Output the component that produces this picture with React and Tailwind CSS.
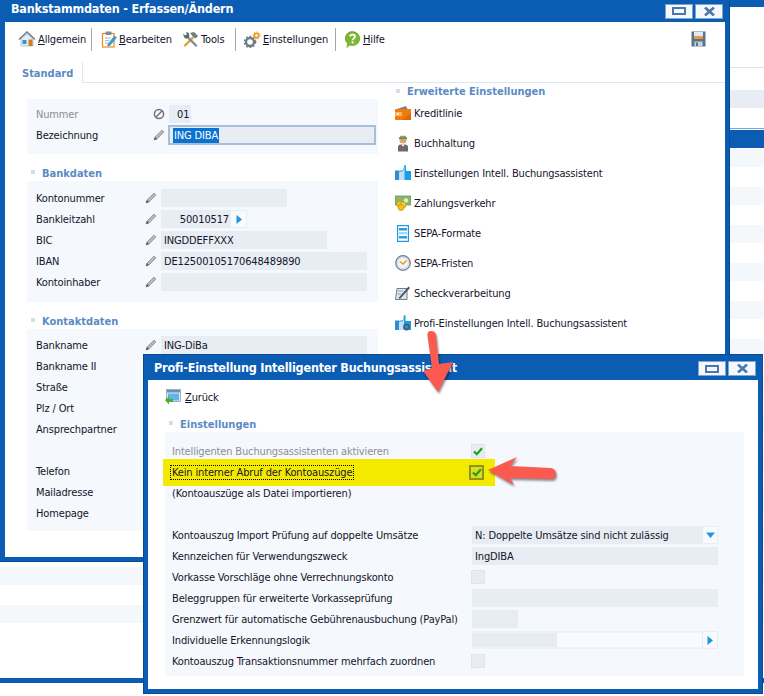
import React from 'react';

const Pencil = () => (
    <svg width="12" height="12" viewBox="0 0 12 12">
        <path d="M1 11 L2 8 L9 1 L11 3 L4 10 Z" fill="#b5b8bc" stroke="#85888c" strokeWidth="0.7" />
        <path d="M1 11 L2 8 L4 10 Z" fill="#555" />
    </svg>
);

const NoEntry = () => (
    <svg width="12" height="12" viewBox="0 0 12 12" fill="none" stroke="#6f747a" strokeWidth="1.5">
        <circle cx="6" cy="6" r="4.6" />
        <path d="M2.8 9.2 L9.2 2.8" />
    </svg>
);

const Home = () => (
    <svg width="18" height="16" viewBox="0 0 18 16">
        <path d="M3 8 V15 H15 V8 L9 3 Z" fill="#e6eef6" stroke="#9aa6b0" strokeWidth="0.6" />
        <path d="M1 8.5 L9 1 L17 8.5" fill="none" stroke="#6f8291" strokeWidth="1.6" />
        <rect x="4.5" y="9" width="4" height="4" fill="#3f8fd8" />
        <rect x="10.5" y="8.5" width="4" height="6.5" fill="#c9801e" />
    </svg>
);

const Clipboard = () => (
    <svg width="16" height="17" viewBox="0 0 16 17">
        <rect x="1.5" y="2.5" width="11.5" height="13.5" fill="#fff" stroke="#ee8a1d" strokeWidth="1.2" />
        <rect x="4.5" y="0.5" width="6" height="3.5" rx="1" fill="#7f8c99" />
        <path d="M4 7 H10 M4 9.5 H8 M4 12 H7" stroke="#9fb7cc" strokeWidth="1" />
        <path d="M7 13 L13.5 5 L15.5 6.6 L9 14.5 L6.8 15 Z" fill="#3aa0e0" stroke="#1c6fae" strokeWidth="0.5" />
    </svg>
);

const Tools = () => (
    <svg width="17" height="16" viewBox="0 0 17 16">
        <path d="M3 14.5 L11 6.5" stroke="#e5a231" strokeWidth="2.4" strokeLinecap="round" />
        <path d="M8 2 L12 1 L16 5 L13.5 7.5 L10 4.5 Z" fill="#6e7c88" />
        <path d="M14 14.5 L6 6.5" stroke="#7f8b96" strokeWidth="2.4" strokeLinecap="round" />
        <path d="M1.5 2.5 L3 4.5 L5 3.5 L4 1.2 C6.5 1 8 3 7 6 L5 7.5 C3 8 1 5.5 1.5 2.5 Z" fill="#59666f" />
    </svg>
);

const Gears = () => (
    <svg width="18" height="17" viewBox="0 0 18 17">
        <circle cx="7" cy="11" r="4" fill="none" stroke="#6f7c88" strokeWidth="2.4" />
        <circle cx="7" cy="11" r="5.6" fill="none" stroke="#6f7c88" strokeWidth="1.4" strokeDasharray="1.8 1.8" />
        <circle cx="13.5" cy="4.5" r="2.2" fill="none" stroke="#ef9a1f" strokeWidth="1.8" />
        <circle cx="13.5" cy="4.5" r="3.6" fill="none" stroke="#ef9a1f" strokeWidth="1" strokeDasharray="1.4 1.4" />
    </svg>
);

const Help = () => (
    <svg width="17" height="17" viewBox="0 0 17 17">
        <path d="M8.5 0.5 A7.5 7 0 1 1 5.5 14 L3 16.5 L3.5 12.5 A7.5 7 0 0 1 8.5 0.5 Z" fill="#7fb72f" stroke="#5f9420" strokeWidth="0.6" />
        <path d="M6 5.5 C6.5 3 11 3 11 5.6 C11 7.4 8.6 7.4 8.6 9.2" fill="none" stroke="#fff" strokeWidth="1.8" />
        <rect x="7.6" y="10.4" width="2" height="2" fill="#fff" />
    </svg>
);

const Save = () => (
    <svg width="15" height="16" viewBox="0 0 15 16">
        <rect x="0.5" y="0.5" width="14" height="15" fill="#5c738f" />
        <rect x="3" y="1" width="9" height="4.5" fill="#dfeaf6" />
        <rect x="3" y="5.5" width="9" height="2.5" fill="#f39a1e" />
        <rect x="3.5" y="10.5" width="8" height="5" fill="#c9d3de" />
        <rect x="5" y="11.5" width="2" height="3.5" fill="#5c738f" />
    </svg>
);

const Wallet = () => (
    <svg width="16" height="16" viewBox="0 0 16 16">
        <path d="M2 4 L11 1 L12.5 4 Z" fill="#7a7f85" />
        <path d="M0 5 Q0 4 1 4 H16 V15 H1 Q0 15 0 14 Z" fill="#f07c0c" />
        <path d="M16 8 L7 15 H16 Z" fill="#d96a05" />
        <rect x="0" y="7" width="7" height="4" fill="#ffb35c" />
        <circle cx="3" cy="9" r="1" fill="#fff" />
    </svg>
);

const Person = () => (
    <svg width="16" height="17" viewBox="0 0 16 17">
        <path d="M3 16.5 V12 Q3 9.5 6 9.5 H10 Q13 9.5 13 12 V16.5 Z" fill="#5e6c7c" />
        <path d="M6.5 9.5 H9.5 L8 12 Z" fill="#fff" />
        <path d="M7.5 11 H8.5 L9 15 L8 16 L7 15 Z" fill="#d8461f" />
        <circle cx="8" cy="5" r="3.6" fill="#e3a06c" />
        <rect x="4" y="2.2" width="8" height="1.8" fill="#3aa247" />
        <rect x="5" y="0.8" width="6" height="1.5" fill="#b88a66" />
    </svg>
);

const Thumb = () => (
    <svg width="16" height="16" viewBox="0 0 16 16">
        <rect x="0" y="5.5" width="4" height="9.5" fill="#2a8fd8" />
        <path d="M4 6 L8 5 L9.5 0 L11 0.5 L11 6 H16 V15 H4 Z" fill="#17a0e8" />
        <path d="M4 7 L8 6 L9.5 1 V15 H4 Z" fill="#c5dff2" />
    </svg>
);

const Money = () => (
    <svg width="16" height="16" viewBox="0 0 16 16">
        <rect x="0" y="1" width="16" height="9" fill="#89b86a" stroke="#5c8f45" strokeWidth="0.7" />
        <circle cx="11" cy="5.5" r="2.2" fill="#dcefc9" />
        <circle cx="4.5" cy="9" r="3" fill="#f3c11f" stroke="#c48e10" strokeWidth="0.7" />
        <circle cx="8" cy="10" r="3" fill="#f7d02f" stroke="#c48e10" strokeWidth="0.7" />
        <circle cx="6" cy="12.5" r="3" fill="#f3c11f" stroke="#c48e10" strokeWidth="0.7" />
    </svg>
);

const Doc = () => (
    <svg width="16" height="17" viewBox="0 0 16 17">
        <rect x="2.6" y="0.6" width="10.8" height="15.8" fill="#fff" stroke="#1a9ae6" strokeWidth="1.2" />
        <rect x="4" y="3" width="8" height="2.5" fill="#2b9ce0" />
        <rect x="4" y="7" width="8" height="2.5" fill="#a9d8f4" />
        <rect x="4" y="11" width="8" height="2.5" fill="#2b9ce0" />
    </svg>
);

const Clock = () => (
    <svg width="16" height="16" viewBox="0 0 16 16">
        <circle cx="8" cy="8" r="7.3" fill="#d8dfe7" stroke="#6f7c88" strokeWidth="1.2" />
        <circle cx="8" cy="8" r="5" fill="#f1f4f8" />
        <path d="M4.8 6.5 L8 9 L11.5 5.5" fill="none" stroke="#f0941e" strokeWidth="1.4" />
    </svg>
);

const Cheque = () => (
    <svg width="16" height="16" viewBox="0 0 16 16">
        <path d="M2 3.5 H12 V14.5 H0.5 Z" fill="#dfe6ee" stroke="#66707b" strokeWidth="0.9" />
        <path d="M3.5 13 L13.5 1.5 L15 3 L5 14 Z" fill="#4a5866" />
        <path d="M3 6 H8 M2.5 9 H6" stroke="#8b98a6" strokeWidth="0.9" />
    </svg>
);

const ThumbGear = () => (
    <svg width="16" height="16" viewBox="0 0 16 16">
        <rect x="0" y="5.5" width="4" height="9.5" fill="#2a8fd8" />
        <path d="M4 6 L8 5 L9 0 L10.5 0.5 L10.5 6 H16 V15 H4 Z" fill="#17a0e8" />
        <path d="M4 7 L8 6 L9 1 V15 H4 Z" fill="#c5dff2" />
        <circle cx="11.5" cy="12" r="2.4" fill="none" stroke="#48617a" strokeWidth="2" />
    </svg>
);

const Back = () => (
    <svg width="16" height="16" viewBox="0 0 16 16">
        <rect x="1.5" y="0.5" width="14" height="12" fill="#dcecf8" stroke="#8aa0b2" strokeWidth="0.8" />
        <rect x="2" y="1" width="13" height="2.5" fill="#6b8fae" />
        <rect x="3" y="4.5" width="11" height="7" fill="#5fb5e8" />
        <path d="M0 11 L4 7.5 V10 H8 V13 H4 V15.5 Z" fill="#59a92c" />
    </svg>
);

const ArrowRight = () => (
    <svg width="6" height="9" viewBox="0 0 6 9"><path d="M0.5 0 L6 4.5 L0.5 9 Z" fill="#1f97e0" /></svg>
);

const ArrowDown = () => (
    <svg width="9" height="6" viewBox="0 0 9 6"><path d="M0 0.5 H9 L4.5 6 Z" fill="#1f97e0" /></svg>
);

const Check = () => (
    <svg width="10" height="9" viewBox="0 0 10 9" fill="none" stroke="#1ea01e" strokeWidth="2.2">
        <path d="M1 4.5 L3.8 7.2 L9 1.2" />
    </svg>
);

const TitleButtons = ({ className = '' }) => (
    <div className={`flex gap-[2px] ${className}`}>
        <div className="w-[28px] h-[15px] bg-[#f4f7fb] border border-[#7fa4d0] flex items-center justify-center">
            <div className="w-[14px] h-[8px] border-2 border-[#4a78ad]" />
        </div>
        <div className="w-[28px] h-[15px] bg-[#f4f7fb] border border-[#7fa4d0] flex items-center justify-center">
            <svg width="11" height="9" viewBox="0 0 11 9" fill="none" stroke="#4a78ad" strokeWidth="2.6">
                <path d="M1 0.5 L10 8.5 M10 0.5 L1 8.5" />
            </svg>
        </div>
    </div>
);

const SectionTitle = ({ children, className = '' }) => (
    <div className={`flex items-center h-[18px] ${className}`}>
        <div className="w-[4px] h-[4px] bg-[#d3deeb] ml-[4px] mr-[7px]" />
        <span className="font-bold text-[#5b8bc4] tracking-normal pt-[3px]">{children}</span>
    </div>
);

const Field = ({ label, width = 'w-[206px]', children }) => (
    <div className="flex items-center h-[18px]">
        <span className="w-[109px] ml-[9px] pt-[2px]">{label}</span>
        <span className="w-[16px] flex"><Pencil /></span>
        {width ? <div className={`${width} h-[18px] bg-[#e8ecf3] px-[3px] pt-[2px] flex items-center`}>{children}</div> : null}
    </div>
);

const Sep = () => <div className="w-px h-[23px] bg-[#a6a6a6]" />;

const MainWindow = () => {
    const extras = [
        { name: 'Kreditlinie', icon: Wallet },
        { name: 'Buchhaltung', icon: Person },
        { name: 'Einstellungen Intell. Buchungsassistent', icon: Thumb },
        { name: 'Zahlungsverkehr', icon: Money },
        { name: 'SEPA-Formate', icon: Doc },
        { name: 'SEPA-Fristen', icon: Clock },
        { name: 'Scheckverarbeitung', icon: Cheque },
        { name: 'Profi-Einstellungen Intell. Buchungsassistent', icon: ThumbGear },
    ];

    return (
        <div className="absolute left-0 top-0 w-[730px] h-[562px] flex flex-col bg-[#0b5cb3] border-r border-b border-[#0a4a94] pl-[5px] pr-[4px] pb-[4px]">
            <div className="h-[22px] shrink-0 flex items-center justify-between pl-[6px] pr-[2px]">
                <span className="text-white font-bold text-[12.5px] tracking-[-0.2px] mb-[5px]">Bankstammdaten - Erfassen/Ändern</span>
                <TitleButtons />
            </div>
            <div className="flex-1 bg-white flex flex-col">
                <div className="h-[40px] pb-[6px] flex items-center">
                    <span className="ml-[13px] w-[20px]"><Home /></span>
                    <span className="w-[53px] pt-[2px]"><span className="underline">A</span>llgemein</span>
                    <Sep />
                    <span className="ml-[9px] w-[18px]"><Clipboard /></span>
                    <span className="w-[63px] pt-[2px]"><span className="underline">B</span>earbeiten</span>
                    <span className="w-[19px]"><Tools /></span>
                    <span className="w-[34px] pt-[2px]">Tools</span>
                    <Sep />
                    <span className="ml-[7px] w-[20px]"><Gears /></span>
                    <span className="w-[72px] pt-[2px]"><span className="underline">E</span>instellungen</span>
                    <Sep />
                    <span className="ml-[8px] w-[19px]"><Help /></span>
                    <span className="pt-[2px]"><span className="underline">H</span>ilfe</span>
                    <span className="ml-auto mr-[19px]"><Save /></span>
                </div>
                <div className="h-[21px] border-b border-[#dde5f0]">
                    <div className="w-[78px] h-[21px] bg-white border-r border-[#dde5f0] pl-[17px] pt-[2px] flex items-center font-bold tracking-normal text-[#5b8bc4]">
                        Standard
                    </div>
                </div>
                <div className="flex flex-1">
                    <div className="ml-[22px] w-[351px] pt-[16px]">
                        <div className="h-[55px] bg-[#f5f8fc] pt-[6px] flex flex-col gap-[3px]">
                            <div className="flex items-center h-[18px]">
                                <span className="w-[117px] ml-[9px] pt-[2px] text-[#8a8f98]">Nummer</span>
                                <span className="w-[16px] flex"><NoEntry /></span>
                                <div className="w-[22px] h-[18px] bg-[#e8ecf3] pl-[8px] pt-[2px] flex items-center">01</div>
                            </div>
                            <div className="flex items-center h-[18px]">
                                <span className="w-[117px] ml-[9px] pt-[2px]">Bezeichnung</span>
                                <span className="w-[15px] flex"><Pencil /></span>
                                <div className="w-[208px] h-[20px] bg-[#e8ecf3] border-2 border-[#a3bfdc] pl-[3px] flex items-center">
                                    <span className="bg-[#0a72d0] text-white px-[1px] pt-[1px]">ING DIBA</span>
                                </div>
                            </div>
                        </div>
                        <SectionTitle className="mt-[9px]">Bankdaten</SectionTitle>
                        <div className="h-[121px] bg-[#f5f8fc] pt-[8px] flex flex-col gap-[3px]">
                            <Field label="Kontonummer" width="w-[126px]" />
                            <div className="flex items-center h-[18px]">
                                <span className="w-[109px] ml-[9px] pt-[2px]">Bankleitzahl</span>
                                <span className="w-[16px] flex"><Pencil /></span>
                                <div className="w-[69px] h-[18px] bg-[#e8ecf3] pr-[1px] pt-[2px] flex items-center justify-end">50010517</div>
                                <div className="w-[17px] h-[18px] bg-[#f8fafd] border border-[#e8ecf3] flex items-center justify-center"><ArrowRight /></div>
                            </div>
                            <Field label="BIC" width="w-[166px]">INGDDEFFXXX</Field>
                            <Field label="IBAN">DE12500105170648489890</Field>
                            <Field label="Kontoinhaber" />
                        </div>
                        <SectionTitle className="mt-[9px]">Kontaktdaten</SectionTitle>
                        <div className="h-[202px] bg-[#f5f8fc] pt-[7px] flex flex-col gap-[3px]">
                            <Field label="Bankname">ING-DiBa</Field>
                            <Field label="Bankname II" width="" />
                            <Field label="Straße" width="" />
                            <Field label="Plz / Ort" width="" />
                            <Field label="Ansprechpartner" width="" />
                            <div className="h-[18px]" />
                            <Field label="Telefon" width="" />
                            <Field label="Mailadresse" width="" />
                            <Field label="Homepage" width="" />
                        </div>
                    </div>
                    <div className="ml-[17px] flex-1">
                        <div className="h-[15px] flex items-center">
                            <div className="w-[4px] h-[4px] bg-[#d3deeb] ml-[1px] mr-[7px]" />
                            <span className="font-bold tracking-normal text-[#5b8bc4] pt-[2px]">Erweiterte Einstellungen</span>
                        </div>
                        {extras.map((item) => (
                            <div key={item.name} className="h-[30px] flex items-center gap-[3px]">
                                <span className="w-[16px] flex"><item.icon /></span>
                                <span className="pt-[2px]">{item.name}</span>
                            </div>
                        ))}
                    </div>
                </div>
            </div>
        </div>
    );
};

const Row = ({ label, muted, children }) => (
    <div className="relative flex items-center h-[18px]">
        <span className={`w-[300px] ml-[7px] pt-[2px] shrink-0 ${muted ? 'text-[#8a8f98]' : ''}`}>{label}</span>
        {children}
    </div>
);

const Box = ({ checked }) => (
    <div className="-ml-[1px] w-[14px] h-[14px] bg-[#e8ecf3] border border-[#dfe4ee] flex items-center justify-center">
        {checked ? <Check /> : null}
    </div>
);

const Dialog = () => (
    <div className="absolute left-[143px] top-[354px] w-[620px] h-[340px] flex flex-col bg-[#0b5cb3] border border-[#0a4a94] px-[4px] pb-[4px]">
        <div className="h-[25px] shrink-0 flex items-center justify-between pl-[6px] pr-[2px]">
            <span className="text-white font-bold text-[12.5px] tracking-[-0.2px]">Profi-Einstellung Intelligenter Buchungsassistent</span>
            <TitleButtons className="mt-[2px]" />
        </div>
        <div className="flex-1 bg-white pl-[17px]">
            <div className="h-[34px] flex items-center gap-[4px]">
                <Back />
                <span className="pt-[2px]"><span className="underline">Z</span>urück</span>
            </div>
            <SectionTitle>Einstellungen</SectionTitle>
            <div className="w-[579px] h-[244px] bg-[#f5f8fc] pt-[10px] flex flex-col gap-[3px]">
                <Row label="Intelligenten Buchungsassistenten aktivieren" muted>
                    <Box checked />
                </Row>
                <div className="relative h-[18px]">
                    <div className="absolute -left-[2px] -top-[4px] w-[332px] h-[27px] bg-[#f4ea00]" />
                    <div className="relative flex items-center h-[18px]">
                        <span className="w-[300px] ml-[5px] pt-[2px] shrink-0">
                            <span className="border border-dotted border-black px-[1px]">Kein interner Abruf der Kontoauszüge</span>
                        </span>
                        <div className="-ml-[1px] w-[15px] h-[15px] bg-[#dcdc20] border-2 border-[#8f9415] flex items-center justify-center"><Check /></div>
                    </div>
                </div>
                <Row label="(Kontoauszüge als Datei importieren)" />
                <div className="h-[18px]" />
                <Row label="Kontoauszug Import Prüfung auf doppelte Umsätze">
                    <div className="w-[230px] h-[18px] bg-[#e8ecf3] px-[3px] pt-[2px] flex items-center">N: Doppelte Umsätze sind nicht zulässig</div>
                    <div className="w-[16px] h-[18px] bg-[#f8fafd] border border-[#e8ecf3] flex items-center justify-center"><ArrowDown /></div>
                </Row>
                <Row label="Kennzeichen für Verwendungszweck">
                    <div className="w-[246px] h-[18px] bg-[#e8ecf3] px-[3px] pt-[2px] flex items-center">IngDIBA</div>
                </Row>
                <Row label="Vorkasse Vorschläge ohne Verrechnungskonto"><Box /></Row>
                <Row label="Beleggruppen für erweiterte Vorkasseprüfung">
                    <div className="w-[246px] h-[18px] bg-[#e8ecf3]" />
                </Row>
                <Row label="Grenzwert für automatische Gebührenausbuchung (PayPal)">
                    <div className="w-[46px] h-[18px] bg-[#e8ecf3]" />
                </Row>
                <Row label="Individuelle Erkennungslogik">
                    <div className="w-[230px] h-[18px] bg-[#f8fafd] border-y-2 border-[#eef1f7] flex">
                        <div className="w-[85px] bg-[#e8ecf3]" />
                    </div>
                    <div className="w-[16px] h-[18px] bg-[#f8fafd] border border-[#e8ecf3] flex items-center justify-center"><ArrowRight /></div>
                </Row>
                <Row label="Kontoauszug Transaktionsnummer mehrfach zuordnen"><Box /></Row>
            </div>
        </div>
    </div>
);

const Arrows = () => (
    <svg className="absolute left-0 top-0 pointer-events-none drop-shadow-[1px_2px_1px_rgba(0,0,0,0.45)]" width="764" height="696" viewBox="0 0 764 696">
        <path d="M427.5 335 Q427 331 431 331 Q435.5 331 436 335 L439 364 L453 362 L438 392 L423 371 L432 368 Z" fill="#fa5a50" />
        <path d="M488 470 L517 457 L510 466 L551 468 Q556 469 556 474 Q556 479 551 479 L510 478 L514 485 Z" fill="#fa5a50" />
    </svg>
);

const BackWindow = () => {
    const bands = Array.from({ length: 13 }, (_, i) => i);

    return (
        <div className="absolute left-0 top-0 w-[764px] h-[683px] border-b-[5px] border-[#0b5cb3] overflow-hidden">
            <div className="h-[7px] bg-[#0b5cb3]" />
            <div className="h-[60px]" />
            <div className="h-px bg-[#dfe2f2]" />
            <div className="h-[22px]" />
            <div className="h-[18px] bg-[#e8ecf4]" />
            <div className="h-[20px]" />
            <div className="h-px bg-[#7aa9e0]" />
            <div className="h-px" />
            <div className="h-[18px] bg-[#0b5cb3]" />
            <div className="h-px" />
            {bands.map((i) => (
                <div key={i} className="h-[38px]">
                    <div className="h-[18px] bg-[#f5f8fb]" />
                </div>
            ))}
        </div>
    );
};

export default function App() {
    return (
        <div className="relative w-[764px] h-[696px] overflow-hidden bg-white text-[11px] leading-[14px] tracking-[-0.15px] text-[#14142a] font-['DejaVu_Sans_Condensed','Noto_Sans',sans-serif]">
            <BackWindow />
            <MainWindow />
            <Dialog />
            <Arrows />
        </div>
    );
}
